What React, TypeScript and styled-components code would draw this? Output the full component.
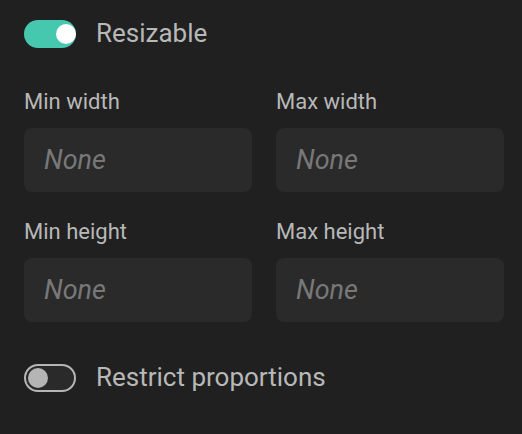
import React, { useState } from 'react';
import styled, { createGlobalStyle } from 'styled-components';

const GlobalStyle = createGlobalStyle`
  html, body {
    margin: 0;
    padding: 0;
    background: #202020;
  }
  body {
    font-family: Roboto, "Liberation Sans", sans-serif;
  }
`;

const Panel = styled.div`
  width: 522px;
  height: 434px;
  box-sizing: border-box;
  padding: 20px 18px 0 24px;
  background: #202020;
`;

const ToggleRow = styled.label`
  display: flex;
  align-items: center;
  gap: 20px;
  height: 28px;
  cursor: pointer;
`;

const Track = styled.span<{ on: boolean }>`
  position: relative;
  display: inline-block;
  width: 52px;
  height: 28px;
  box-sizing: border-box;
  border-radius: 14px;
  background: ${p => (p.on ? '#46c8ae' : '#2a2a2a')};
  border: ${p => (p.on ? 'none' : '2px solid #b5b5b5')};
`;

const Knob = styled.span<{ on: boolean }>`
  position: absolute;
  top: ${p => (p.on ? '4px' : '2px')};
  left: ${p => (p.on ? '32px' : '2px')};
  width: 20px;
  height: 20px;
  border-radius: 50%;
  background: ${p => (p.on ? '#ffffff' : '#b5b5b5')};
`;

const ToggleText = styled.span`
  font-size: 26px;
  color: #b8b8b8;
  line-height: 28px;
  margin-top: -2px;
`;

const FieldGrid = styled.div`
  display: grid;
  grid-template-columns: 228px 228px;
  column-gap: 24px;
  row-gap: 28px;
  margin-top: 42px;
  margin-bottom: 42px;
`;

const Field = styled.div`
  display: flex;
  flex-direction: column;
  gap: 14px;
`;

const Label = styled.span`
  font-size: 22px;
  line-height: 24px;
  color: #b8b8b8;
`;

const Input = styled.input`
  box-sizing: border-box;
  width: 228px;
  height: 64px;
  padding: 0 20px;
  border: none;
  border-radius: 8px;
  background: #2a2a2a;
  color: #d0d0d0;
  font-family: Roboto, "Liberation Sans", sans-serif;
  font-size: 27px;
  outline: none;

  &::placeholder {
    color: #787878;
    font-style: italic;
  }
`;

const Toggle: React.FC<{ on: boolean; label: string; onToggle: () => void }> = ({ on, label, onToggle }) => (
  <ToggleRow onClick={onToggle}>
    <Track on={on}>
      <Knob on={on} />
    </Track>
    <ToggleText>{label}</ToggleText>
  </ToggleRow>
);

const fields = ['Min width', 'Max width', 'Min height', 'Max height'];

const App: React.FC = () => {
  const [resizable, setResizable] = useState(true);
  const [restrict, setRestrict] = useState(false);

  return (
    <>
      <GlobalStyle />
      <Panel>
        <Toggle on={resizable} label="Resizable" onToggle={() => setResizable(v => !v)} />
        <FieldGrid>
          {fields.map(f => (
            <Field key={f}>
              <Label>{f}</Label>
              <Input placeholder="None" />
            </Field>
          ))}
        </FieldGrid>
        <Toggle on={restrict} label="Restrict proportions" onToggle={() => setRestrict(v => !v)} />
      </Panel>
    </>
  );
};

export default App;
